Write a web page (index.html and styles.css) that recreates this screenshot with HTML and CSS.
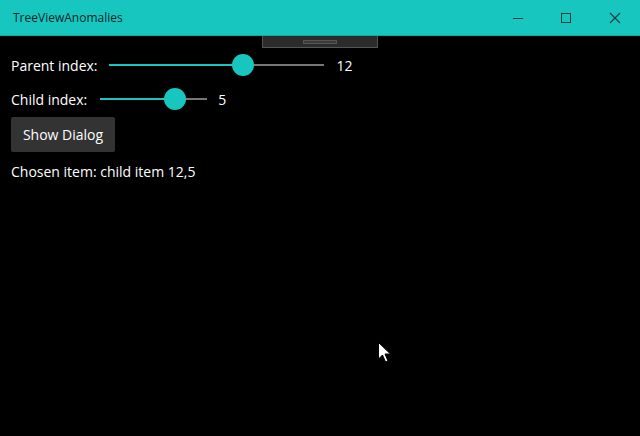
FILE: index.html
```html
<!DOCTYPE html>
<html>
<head>
<meta charset="utf-8">
<link rel="stylesheet" href="styles.css">
</head>
<body>
<div class="window">
  <div class="titlebar">
    <span class="title">TreeViewAnomalies</span>
    <div class="controls">
      <div class="ctl">
        <svg width="12" height="12" viewBox="0 0 12 12"><path d="M1 6.5H11" stroke="#1a3a39" stroke-width="1"/></svg>
      </div>
      <div class="ctl">
        <svg width="12" height="12" viewBox="0 0 12 12"><rect x="1.5" y="1.5" width="9" height="9" fill="none" stroke="#1a3a39" stroke-width="1"/></svg>
      </div>
      <div class="ctl">
        <svg width="12" height="12" viewBox="0 0 12 12"><path d="M1 1L11 11M11 1L1 11" stroke="#1a3a39" stroke-width="1.1"/></svg>
      </div>
    </div>
  </div>
  <div class="content">
    <div class="tab"><span class="tab-line"></span></div>
    <div class="row row-parent">
      <span class="label">Parent index:</span>
      <div class="slider slider-parent">
        <div class="fill" style="width:134px"></div>
        <div class="thumb"></div>
        <div class="rest"></div>
      </div>
      <span class="value">12</span>
    </div>
    <div class="row row-child">
      <span class="label">Child index:</span>
      <div class="slider slider-child">
        <div class="fill" style="width:75px"></div>
        <div class="thumb"></div>
        <div class="rest"></div>
      </div>
      <span class="value value-child">5</span>
    </div>
    <button class="btn">Show Dialog</button>
    <div class="chosen">Chosen item: child item 12,5</div>
    <svg class="cursor" width="14" height="22" viewBox="0 0 14 22"><path d="M0.5 0.5V17L4.5 13L7.5 20L10 19L7 12H12.5Z" fill="#fff" stroke="#000" stroke-width="1"/></svg>
  </div>
</div>
</body>
</html>
```
FILE: styles.css
```css
html, body {
  margin: 0;
  padding: 0;
  background: #000;
}
.window {
  width: 640px;
  height: 436px;
  background: #000;
  font-family: "Open Sans", "Noto Sans", sans-serif;
  color: #fff;
  display: flex;
  flex-direction: column;
  overflow: hidden;
}
.titlebar {
  height: 36px;
  background: #17c7bf;
  border-bottom: 1px solid #12a9a2;
  display: flex;
  align-items: center;
  justify-content: space-between;
  box-sizing: border-box;
  flex: none;
}
.title {
  font-size: 12px;
  color: #0a1f1f;
  padding-left: 13px;
}
.controls {
  display: flex;
  height: 100%;
}
.ctl {
  width: 48px;
  height: 100%;
  display: flex;
  align-items: center;
  justify-content: center;
}
.ctl:last-child {
  width: 50px;
}
.content {
  position: relative;
  flex: 1;
  padding: 0 11px;
}
.tab {
  position: absolute;
  left: 262px;
  top: 0;
  width: 114px;
  height: 11px;
  background: #2b2b2b;
  border: 1px solid #555;
  border-top: none;
  display: flex;
  justify-content: center;
  align-items: center;
}
.tab-line {
  width: 32px;
  height: 2px;
  border: 1px solid #555;
  background: #3a3a3a;
}
.row {
  display: flex;
  align-items: center;
  height: 30px;
  font-size: 14px;
}
.row-parent {
  margin-top: 14px;
}
.row-child {
  margin-top: 4px;
}
.slider {
  position: relative;
  display: flex;
  align-items: center;
  height: 24px;
}
.slider-parent {
  width: 215px;
  margin-left: 11px;
}
.slider-child {
  width: 107px;
  margin-left: 13px;
}
.fill {
  height: 2px;
  background: #17c7bf;
}
.rest {
  flex: 1;
  height: 2px;
  background: #777;
}
.thumb {
  width: 22px;
  height: 22px;
  border-radius: 50%;
  background: #17c7bf;
  margin: 0 -11px;
  position: relative;
  z-index: 1;
}
.value {
  margin-left: 13px;
}
.value-child {
  margin-left: 11px;
}
.btn {
  display: block;
  margin-top: 3px;
  height: 35px;
  width: 104px;
  padding: 0;
  border: none;
  border-radius: 2px;
  background: #333;
  color: #fff;
  font-family: "Open Sans", "Noto Sans", sans-serif;
  font-size: 14px;
}
.chosen {
  margin-top: 10px;
  font-size: 14px;
}
.cursor {
  position: absolute;
  left: 378px;
  top: 306px;
}
```
